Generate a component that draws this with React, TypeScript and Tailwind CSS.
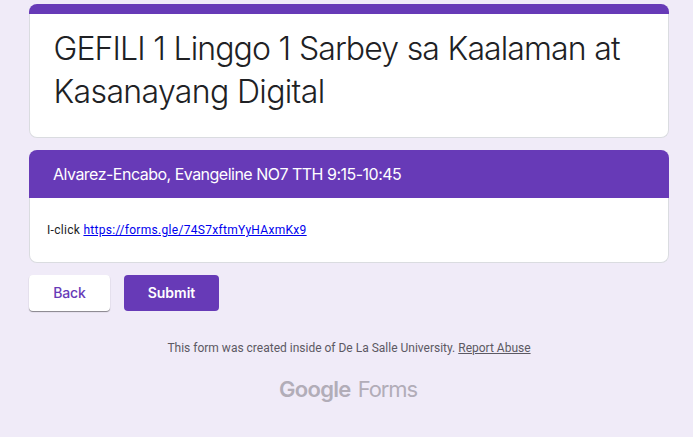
import React from 'react';

function Card({ heading, children }: { heading: React.ReactNode; children: React.ReactNode }) {
  return (
    <section className="flex w-[640px] flex-col">
      {heading}
      <div className="flex-1 rounded-b-lg border border-t-0 border-[#dadce0] bg-white">{children}</div>
    </section>
  );
}

export default function App() {
  return (
    <main className="flex h-[437px] w-[693px] flex-col overflow-hidden bg-[#f0ebf8] pl-[29px] pt-1 font-['Inter',sans-serif]">
      <div className="flex h-[134px]">
        <Card heading={<div className="h-2.5 rounded-t-lg bg-[#673ab7]" />}>
          <h1 className="pl-[23.5px] pt-[13px] text-[32px] font-[340] leading-[43px] text-[#202124]">
            <span className="block w-fit whitespace-nowrap tracking-[-0.9px] [word-spacing:0.5px]">GEFILI 1 Linggo 1 Sarbey sa Kaalaman at</span>
            <span className="block w-fit whitespace-nowrap tracking-[-0.64px]">Kasanayang Digital</span>
          </h1>
        </Card>
      </div>

      <div className="mt-3 flex h-[113px]">
        <Card
          heading={
            <h2 className="flex h-12 items-center rounded-t-lg bg-[#673ab7] pl-6 text-base text-white">
              <span className="whitespace-nowrap tracking-[-0.51px]">Alvarez-Encabo, Evangeline NO7 TTH 9:15-10:45</span>
            </h2>
          }
        >
          <p className="pl-[17px] pt-[22px] font-['Roboto',sans-serif] text-xs leading-5 tracking-[0.3px] text-[#202124]">
            <span>I-click </span>
            <a href="#" className="text-[#0000ee] underline">https://forms.gle/74S7xftmYyHAxmKx9</a>
          </p>
        </Card>
      </div>

      <div className="mt-3 flex gap-3.5 text-sm leading-[35px]">
        <button className="h-9 w-[81px] rounded bg-white pb-px font-medium tracking-[-0.2px] text-[#673ab7] shadow-[0_1px_1px_rgba(0,0,0,0.45)]">Back</button>
        <button className="h-9 w-[95px] rounded bg-[#673ab7] pb-px font-semibold text-white">Submit</button>
      </div>

      <footer className="flex w-[640px] flex-col items-center">
        <p className="mt-[29px] whitespace-nowrap font-['Roboto',sans-serif] text-xs leading-4 text-[#5c5963]">
          <span>This form was created inside of De La Salle University. </span>
          <a href="#" className="underline">Report Abuse</a>
        </p>
        <div className="mt-[17px] flex gap-[7px] whitespace-nowrap pr-[2px] text-[22px] leading-8 text-[#b2adb8]">
          <span className="font-semibold tracking-[-0.7px]">Google</span>
          <span className="tracking-[-1.1px]">Forms</span>
        </div>
      </footer>
    </main>
  );
}
